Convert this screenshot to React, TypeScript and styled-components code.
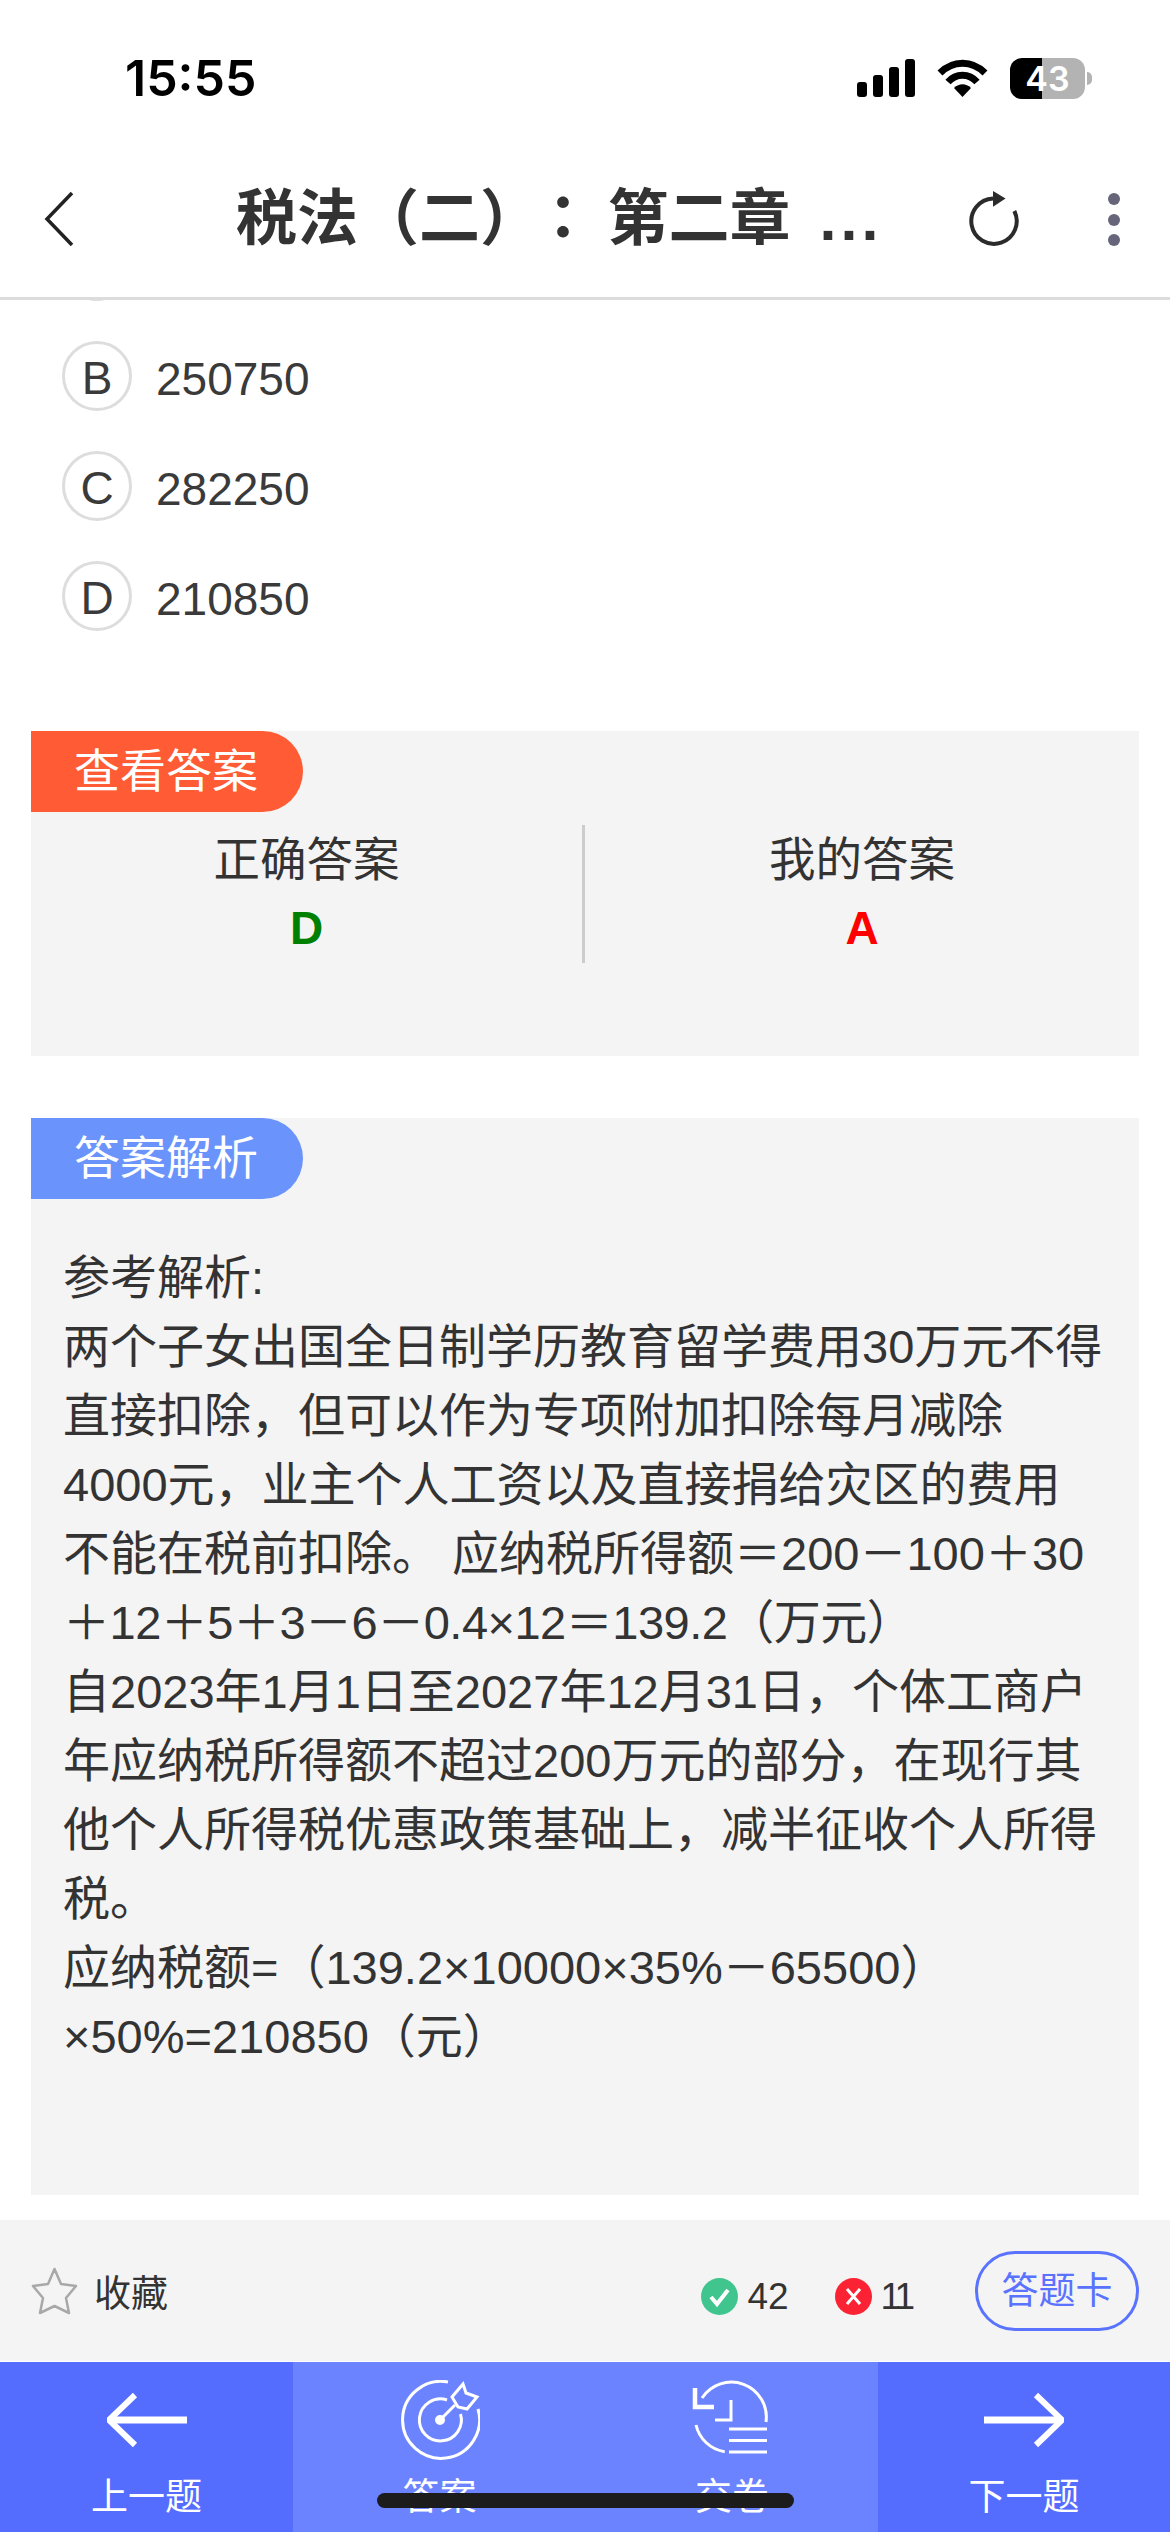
import React from 'react';
import styled, { createGlobalStyle } from 'styled-components';

const SANS = `"Liberation Sans", "Noto Sans CJK SC", sans-serif`;

const GlobalStyle = createGlobalStyle`
    html, body {
        margin: 0;
        padding: 0;
        background: #fff;
    }
    body {
        font-family: ${SANS};
    }
`;

const Page = styled.div`
    position: relative;
    display: flex;
    flex-direction: column;
    width: 1170px;
    height: 2532px;
    overflow: hidden;
    background: #fff;
    color: #333;
`;

const StatusBar = styled.div`
    display: flex;
    align-items: center;
    justify-content: space-between;
    height: 156px;
    padding: 0 85px 0 125px;
    box-sizing: border-box;
    flex: none;
`;

const Time = styled.div`
    font-family: Inter, sans-serif;
    font-size: 50px;
    font-weight: 600;
    color: #000;
`;

const StatusIcons = styled.div`
    display: flex;
    align-items: center;
    gap: 22px;
`;

const Battery = styled.div`
    position: relative;
    width: 75px;
    height: 41px;
    border-radius: 12px;
    background: linear-gradient(90deg, #000 0 32px, #b3b3b3 32px 100%);
    color: #fff;
    font-family: Inter, sans-serif;
    font-size: 34px;
    font-weight: 600;
    line-height: 41px;
    text-align: center;

    &::after {
        content: '';
        position: absolute;
        left: 77px;
        top: 14px;
        width: 5px;
        height: 13px;
        border-radius: 0 6px 6px 0;
        background: #b3b3b3;
    }
`;

const Header = styled.div`
    display: flex;
    align-items: center;
    height: 144px;
    padding: 0 0 14px 44px;
    box-sizing: border-box;
    flex: none;
    border-bottom: 3px solid #dcdcdc;
    position: relative;
    z-index: 2;
    background: #fff;
`;

const BackIcon = styled.svg`
    flex: none;
    margin-bottom: 2px;
`;

const Title = styled.div`
    margin: 0 0 12px 162px;
    width: 660px;
    font-size: 61px;
    font-weight: 700;
    white-space: nowrap;
    color: #333;
`;

const TitleColon = styled.span`
    font-family: "Noto Sans CJK TC", sans-serif;
    margin: 0 14px 0 22px;
`;

const TitleDots = styled.span`
    margin-left: 8px;
    letter-spacing: 4px;
`;

const RefreshIcon = styled.svg`
    flex: none;
    margin: 0 0 3px 70px;
`;

const MoreIcon = styled.svg`
    flex: none;
    margin-left: 85px;
`;

const Scroller = styled.div`
    flex: 1;
    overflow: hidden;
    min-height: 0;
`;

const ScrollInner = styled.div`
    margin-top: -69px;
`;

const Options = styled.div`
    display: flex;
    flex-direction: column;
    gap: 40px;
    padding: 0 0 0 62px;
`;

const Option = styled.div`
    display: flex;
    align-items: center;
    gap: 24px;
    height: 70px;
    font-size: 46px;
    color: #3a3a3a;
`;

const OptionValue = styled.div`
    padding-top: 6px;
`;

const OptionCircle = styled.div`
    width: 70px;
    height: 70px;
    box-sizing: border-box;
    padding-top: 3px;
    border: 3px solid #ddd;
    border-radius: 50%;
    display: flex;
    align-items: center;
    justify-content: center;
    font-size: 46px;
`;

const Card = styled.section<{ $height: number; $top: number }>`
    margin: ${(p) => p.$top}px 31px 0;
    height: ${(p) => p.$height}px;
    background: #f4f4f4;
`;

const Tag = styled.div<{ $color: string }>`
    width: 272px;
    height: 81px;
    box-sizing: border-box;
    padding-left: 43px;
    border-radius: 0 41px 41px 0;
    background: ${(p) => p.$color};
    color: #fff;
    font-size: 46px;
    line-height: 81px;
`;

const AnswerRow = styled.div`
    display: grid;
    grid-template-columns: 1fr 1fr;
    margin-top: 13px;
`;

const AnswerCol = styled.div<{ $divider?: boolean }>`
    height: 138px;
    padding-top: 3px;
    box-sizing: border-box;
    display: flex;
    flex-direction: column;
    align-items: center;
    ${(p) => (p.$divider ? 'border-right: 3px solid #ccc;' : '')}
`;

const AnswerLabel = styled.div`
    font-size: 46.5px;
    line-height: 64px;
    color: #333;
`;

const AnswerValue = styled.div<{ $color: string }>`
    margin-top: 9px;
    font-size: 46px;
    line-height: 54px;
    font-weight: 700;
    color: ${(p) => p.$color};
`;

const Analysis = styled.div`
    padding: 44px 0 0 32px;
    font-size: 47px;
    line-height: 69px;
    color: #333;
`;

const AnalysisLine = styled.div<{ $tight?: boolean }>`
    white-space: nowrap;
    ${(p) => (p.$tight ? 'letter-spacing: -0.5px;' : '')}
`;

const ActionBar = styled.div`
    display: flex;
    align-items: center;
    height: 141px;
    flex: none;
    box-sizing: border-box;
    padding: 0 31px;
    background: #f4f4f4;
`;

const Collect = styled.div`
    display: flex;
    align-items: center;
    gap: 16px;
    font-size: 37px;
    color: #333;
`;

const Stats = styled.div`
    margin-left: auto;
    display: flex;
    align-items: center;
    gap: 46px;
    padding-top: 12px;
    font-size: 37px;
`;

const Stat = styled.div`
    display: flex;
    align-items: center;
    gap: 9px;
`;

const StatCount = styled.span<{ $narrow?: boolean }>`
    ${(p) => (p.$narrow ? 'letter-spacing: -4px;' : '')}
`;

const CardButton = styled.div`
    margin-left: 64px;
    width: 164px;
    height: 80px;
    box-sizing: border-box;
    border: 3px solid #5a73ff;
    border-radius: 40px;
    color: #5a73ff;
    font-size: 37px;
    line-height: 75px;
    text-align: center;
`;

const BottomNav = styled.nav`
    display: grid;
    grid-template-columns: 293px 293px 292px 292px;
    height: 170px;
    margin-top: 1px;
    flex: none;
`;

const NavItem = styled.div<{ $light?: boolean }>`
    display: flex;
    flex-direction: column;
    align-items: center;
    padding-top: 18px;
    box-sizing: border-box;
    background: ${(p) => (p.$light ? '#6c83ff' : '#556dff')};
    color: #fff;
    font-size: 37px;
    line-height: 50px;
`;

const NavLabel = styled.div`
    margin-top: 13px;
`;

const HomeIndicator = styled.div`
    position: absolute;
    left: 377px;
    top: 2493px;
    width: 417px;
    height: 15px;
    border-radius: 8px;
    background: #1c1c1c;
`;

const ANALYSIS_LINES = [
    '参考解析:',
    '两个子女出国全日制学历教育留学费用30万元不得',
    '直接扣除，但可以作为专项附加扣除每月减除',
    '4000元，业主个人工资以及直接捐给灾区的费用',
    '不能在税前扣除。 应纳税所得额＝200－100＋30',
    '＋12＋5＋3－6－0.4×12＝139.2（万元）',
    '自2023年1月1日至2027年12月31日，个体工商户',
    '年应纳税所得额不超过200万元的部分，在现行其',
    '他个人所得税优惠政策基础上，减半征收个人所得',
    '税。',
    '应纳税额=（139.2×10000×35%－65500）',
    '×50%=210850（元）',
];

// first row is scrolled away behind the header, only the bottom of its circle shows
const OPTIONS = [
    ['', ''],
    ['B', '250750'],
    ['C', '282250'],
    ['D', '210850'],
];

const SignalIcon = () => (
    <svg width="58" height="38" viewBox="0 0 58 38" fill="#000">
        <rect x="0" y="23" width="10" height="15" rx="3" />
        <rect x="16" y="16" width="10" height="22" rx="3" />
        <rect x="32" y="8" width="10" height="30" rx="3" />
        <rect x="48" y="0" width="10" height="38" rx="3" />
    </svg>
);

const WifiIcon = () => (
    <svg width="51" height="38" viewBox="0 0 51 38" fill="none" stroke="#000" strokeWidth="7">
        <path d="M3 14 C16 1 35 1 48 14" />
        <path d="M11 23 C19 14 32 14 40 23" />
        <path d="M17 29 L25.5 38 L34 29 C29 24 22 24 17 29 Z" fill="#000" stroke="none" />
    </svg>
);

const StarIcon = () => (
    <svg width="47" height="48" viewBox="0 0 47 48" fill="none" stroke="#a8a8a8" strokeWidth="2.5" strokeLinejoin="round">
        <path d="M23.5 2 L30 17 L45 19 L35 31 L38 46 L23.5 39 L9 46 L12 31 L2 19 L17 17 Z" />
    </svg>
);

const CheckBadge = () => (
    <svg width="37" height="37" viewBox="0 0 37 37">
        <circle cx="18.5" cy="18.5" r="18.5" fill="#41c58f" />
        <path d="M10 19 L16 26 L27 12" fill="none" stroke="#fff" strokeWidth="4" />
    </svg>
);

const CrossBadge = () => (
    <svg width="37" height="37" viewBox="0 0 37 37">
        <circle cx="18.5" cy="18.5" r="18.5" fill="#fb2333" />
        <path d="M12 11 L25 26 M25 11 L12 26" fill="none" stroke="#fff" strokeWidth="3" />
    </svg>
);

const ArrowIcon = ({ flip }: { flip?: boolean }) => (
    <svg width="80" height="80" viewBox="0 0 80 80" fill="none" stroke="#fff" strokeWidth="6" strokeLinejoin="round">
        <g transform={flip ? 'matrix(-1 0 0 1 80 0)' : undefined}>
            <path d="M2 40 H80" strokeWidth="7" />
            <path d="M28 15 L2 40 L28 65" />
        </g>
    </svg>
);

const TargetIcon = () => (
    <svg width="80" height="80" viewBox="0 0 80 80" fill="none" stroke="#fff" strokeWidth="3">
        <path d="M48 2 A38.5 38.5 0 1 0 78 29" />
        <path d="M47 20 A21 21 0 1 0 60.5 34" />
        <circle cx="40" cy="40" r="3.5" fill="#fff" />
        <path d="M40 40 L55 25" />
        <path d="M63 4 L66 13 L77 17 L67 29 L58 27 L52 17 Z" />
    </svg>
);

const ReturnIcon = () => (
    <svg width="80" height="80" viewBox="0 0 80 80" fill="none" stroke="#fff" strokeWidth="3">
        <path d="M74 42 A35 35 0 0 0 10 18" />
        <path d="M4 45 A35 35 0 0 0 32.7 71.7" />
        <path d="M3 8 V27 H22" strokeWidth="4.5" />
        <path d="M39 20 V40 H23" />
        <path d="M37 49 H75 M37 60.5 H75 M37 72 H75" />
    </svg>
);

export default function App() {
    return (
        <Page>
            <GlobalStyle />
            <StatusBar>
                <Time>15:55</Time>
                <StatusIcons>
                    <SignalIcon />
                    <WifiIcon />
                    <Battery>43</Battery>
                </StatusIcons>
            </StatusBar>
            <Header>
                <BackIcon width="30" height="56" viewBox="0 0 30 56" fill="none" stroke="#222" strokeWidth="3.5">
                    <path d="M28 2 L3 28 L28 54" />
                </BackIcon>
                <Title>
                    税法（二）<TitleColon>：</TitleColon>第二章<TitleDots> ...</TitleDots>
                </Title>
                <RefreshIcon width="56" height="58" viewBox="0 0 56 58" fill="none" stroke="#2b2b2b" strokeWidth="4">
                    <path d="M48.3 22 A22.7 22.7 0 1 1 27 9.5" />
                    <path d="M27 2 L39.6 9.5 L27 17.7 Z" fill="#2b2b2b" stroke="none" />
                </RefreshIcon>
                <MoreIcon width="14" height="56" viewBox="0 0 14 56" fill="#66657a">
                    <circle cx="7" cy="7" r="6" />
                    <circle cx="7" cy="28" r="6" />
                    <circle cx="7" cy="48" r="6" />
                </MoreIcon>
            </Header>
            <Scroller>
                <ScrollInner>
                    <Options>
                        {OPTIONS.map(([letter, value]) => (
                            <Option key={value}>
                                <OptionCircle>{letter}</OptionCircle>
                                <OptionValue>{value}</OptionValue>
                            </Option>
                        ))}
                    </Options>
                    <Card $top={100} $height={325}>
                        <Tag $color="#ff5b35">查看答案</Tag>
                        <AnswerRow>
                            <AnswerCol $divider>
                                <AnswerLabel>正确答案</AnswerLabel>
                                <AnswerValue $color="#008000">D</AnswerValue>
                            </AnswerCol>
                            <AnswerCol>
                                <AnswerLabel>我的答案</AnswerLabel>
                                <AnswerValue $color="#ff0000">A</AnswerValue>
                            </AnswerCol>
                        </AnswerRow>
                    </Card>
                    <Card $top={62} $height={1077}>
                        <Tag $color="#6a94fb">答案解析</Tag>
                        <Analysis>
                            {ANALYSIS_LINES.map((line, i) => (
                                <AnalysisLine key={line} $tight={i === 5}>
                                    {line}
                                </AnalysisLine>
                            ))}
                        </Analysis>
                    </Card>
                </ScrollInner>
            </Scroller>
            <ActionBar>
                <Collect>
                    <StarIcon />
                    收藏
                </Collect>
                <Stats>
                    <Stat>
                        <CheckBadge />
                        <StatCount>42</StatCount>
                    </Stat>
                    <Stat>
                        <CrossBadge />
                        <StatCount $narrow>11</StatCount>
                    </Stat>
                </Stats>
                <CardButton>答题卡</CardButton>
            </ActionBar>
            <BottomNav>
                <NavItem>
                    <ArrowIcon />
                    <NavLabel>上一题</NavLabel>
                </NavItem>
                <NavItem $light>
                    <TargetIcon />
                    <NavLabel>答案</NavLabel>
                </NavItem>
                <NavItem $light>
                    <ReturnIcon />
                    <NavLabel>交卷</NavLabel>
                </NavItem>
                <NavItem>
                    <ArrowIcon flip />
                    <NavLabel>下一题</NavLabel>
                </NavItem>
            </BottomNav>
            <HomeIndicator />
        </Page>
    );
}
